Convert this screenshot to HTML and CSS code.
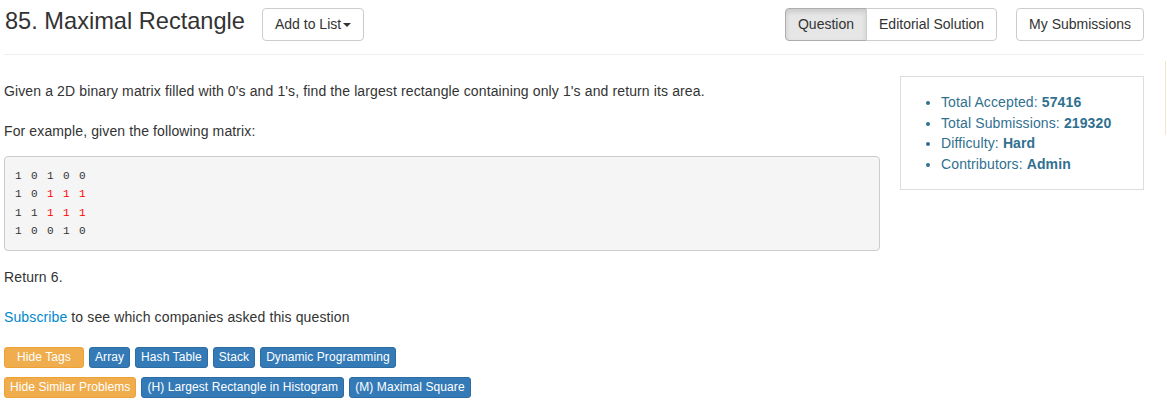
FILE: index.html
```html
<!DOCTYPE html>
<html>
<head>
<meta charset="utf-8">
<link rel="stylesheet" href="styles.css">
</head>
<body>
<div class="page">
  <div class="header">
    <h3 class="title">85. Maximal Rectangle</h3>
    <button class="btn add-list">Add to List<span class="caret"></span></button>
    <div class="spacer"></div>
    <div class="btn-group">
      <button class="btn active">Question</button>
      <button class="btn">Editorial Solution</button>
    </div>
    <button class="btn subs">My Submissions</button>
  </div>
  <div class="rule"></div>
  <div class="row">
    <div class="main">
      <p>Given a 2D binary matrix filled with 0's and 1's, find the largest rectangle containing only 1's and return its area.</p>
      <p class="lead-in">For example, given the following matrix:</p>
      <pre class="matrix"><span class="line">1 0 1 0 0</span><span class="line">1 0 <span class="hl">1 1 1</span></span><span class="line">1 1 <span class="hl">1 1 1</span></span><span class="line">1 0 0 1 0</span></pre>
      <p>Return 6.</p>
      <p class="last"><a class="link" href="#">Subscribe</a> to see which companies asked this question</p>
      <div class="tags">
        <span class="tag warn wide">Hide Tags</span>
        <span class="tag">Array</span>
        <span class="tag">Hash Table</span>
        <span class="tag">Stack</span>
        <span class="tag">Dynamic Programming</span>
      </div>
      <div class="tags">
        <span class="tag warn">Hide Similar Problems</span>
        <span class="tag">(H) Largest Rectangle in Histogram</span>
        <span class="tag">(M) Maximal Square</span>
      </div>
    </div>
    <div class="side">
      <div class="panel">
        <ul class="stats">
          <li>Total Accepted: <b>57416</b></li>
          <li>Total Submissions: <b>219320</b></li>
          <li>Difficulty: <b>Hard</b></li>
          <li>Contributors: <b>Admin</b></li>
        </ul>
      </div>
    </div>
  </div>
</div>
<div class="edge"></div>
</body>
</html>
```

FILE: styles.css
```css
* { box-sizing: border-box; }
html, body { margin: 0; padding: 0; background: #fff; }
body {
  font-family: "Liberation Sans", Arial, sans-serif;
  font-size: 14px;
  color: #333;
  line-height: 20px;
  letter-spacing: 0.12px;
}
.page {
  width: 1144px;
  padding-left: 4px;
}
.header {
  display: flex;
  align-items: flex-start;
  padding-top: 8px;
  height: 41px;
}
.title {
  margin: 0;
  font-size: 23.6px;
  font-weight: normal;
  line-height: 27px;
  color: #333;
  padding-left: 1px;
  letter-spacing: 0;
}
.btn {
  font-family: "Liberation Sans", Arial, sans-serif;
  font-size: 14px;
  line-height: 19px;
  height: 33px;
  padding: 6px 12px;
  border: 1px solid #ccc;
  border-radius: 4px;
  background: #fff;
  color: #333;
  margin: 0;
  white-space: nowrap;
  letter-spacing: 0;
}
.add-list { margin-left: 17px; }
.caret {
  display: inline-block;
  width: 0;
  height: 0;
  margin-left: 2px;
  vertical-align: middle;
  border-top: 4px solid #333;
  border-left: 4px solid transparent;
  border-right: 4px solid transparent;
}
.spacer { flex: 1; }
.btn-group { display: flex; }
.btn-group .btn:first-child {
  border-top-right-radius: 0;
  border-bottom-right-radius: 0;
}
.btn-group .btn:last-child {
  border-top-left-radius: 0;
  border-bottom-left-radius: 0;
  margin-left: -1px;
}
.btn.active {
  background: #e6e6e6;
  border-color: #adadad;
  box-shadow: inset 0 3px 5px rgba(0,0,0,0.125);
}
.subs { margin-left: 19px; }
.rule {
  margin-top: 13px;
  border-top: 1px solid #eee;
  height: 0;
}
.row {
  display: flex;
  gap: 20px;
  margin-top: 21px;
}
.main {
  width: 876px;
  padding-top: 5px;
}
.main p { margin: 0 0 20px; }
.main p.lead-in { margin-bottom: 15px; }
.main p.last { margin-bottom: 20px; }
.matrix {
  margin: 0 0 16px;
  padding: 9.5px 10px;
  background: #f5f5f5;
  border: 1px solid #ccc;
  border-radius: 4px;
  font-family: "Liberation Mono", monospace;
  font-size: 11px;
  letter-spacing: 1.4px;
  line-height: 18.5px;
  color: #333;
  height: 95px;
}
.line { display: block; height: 18.5px; }
.hl { color: #f00; }
.link { color: #0088cc; text-decoration: none; }
.tags {
  display: flex;
  gap: 5px;
  margin-bottom: 9px;
}
.tag {
  display: inline-block;
  font-size: 12px;
  line-height: 19px;
  height: 21px;
  padding: 0 5px;
  color: #fff;
  background: #337ab7;
  border: 1px solid #2e6da4;
  border-radius: 3px;
  white-space: nowrap;
  letter-spacing: 0.08px;
}
.tag.warn {
  background: #f0ad4e;
  border-color: #eea236;
}
.tag.wide {
  min-width: 80px;
  text-align: center;
}
.side { width: 244px; }
.panel {
  border: 1px solid #ddd;
  padding: 15px 0 14px;
}
.stats {
  margin: 0;
  padding-left: 40px;
  line-height: 20.67px;
  color: #31708f;
}
.stats b { font-weight: bold; }
.edge {
  position: absolute;
  left: 1165px;
  top: 61px;
  width: 2px;
  height: 74px;
  border-left: 1px solid #fbe3c4;
}
```
